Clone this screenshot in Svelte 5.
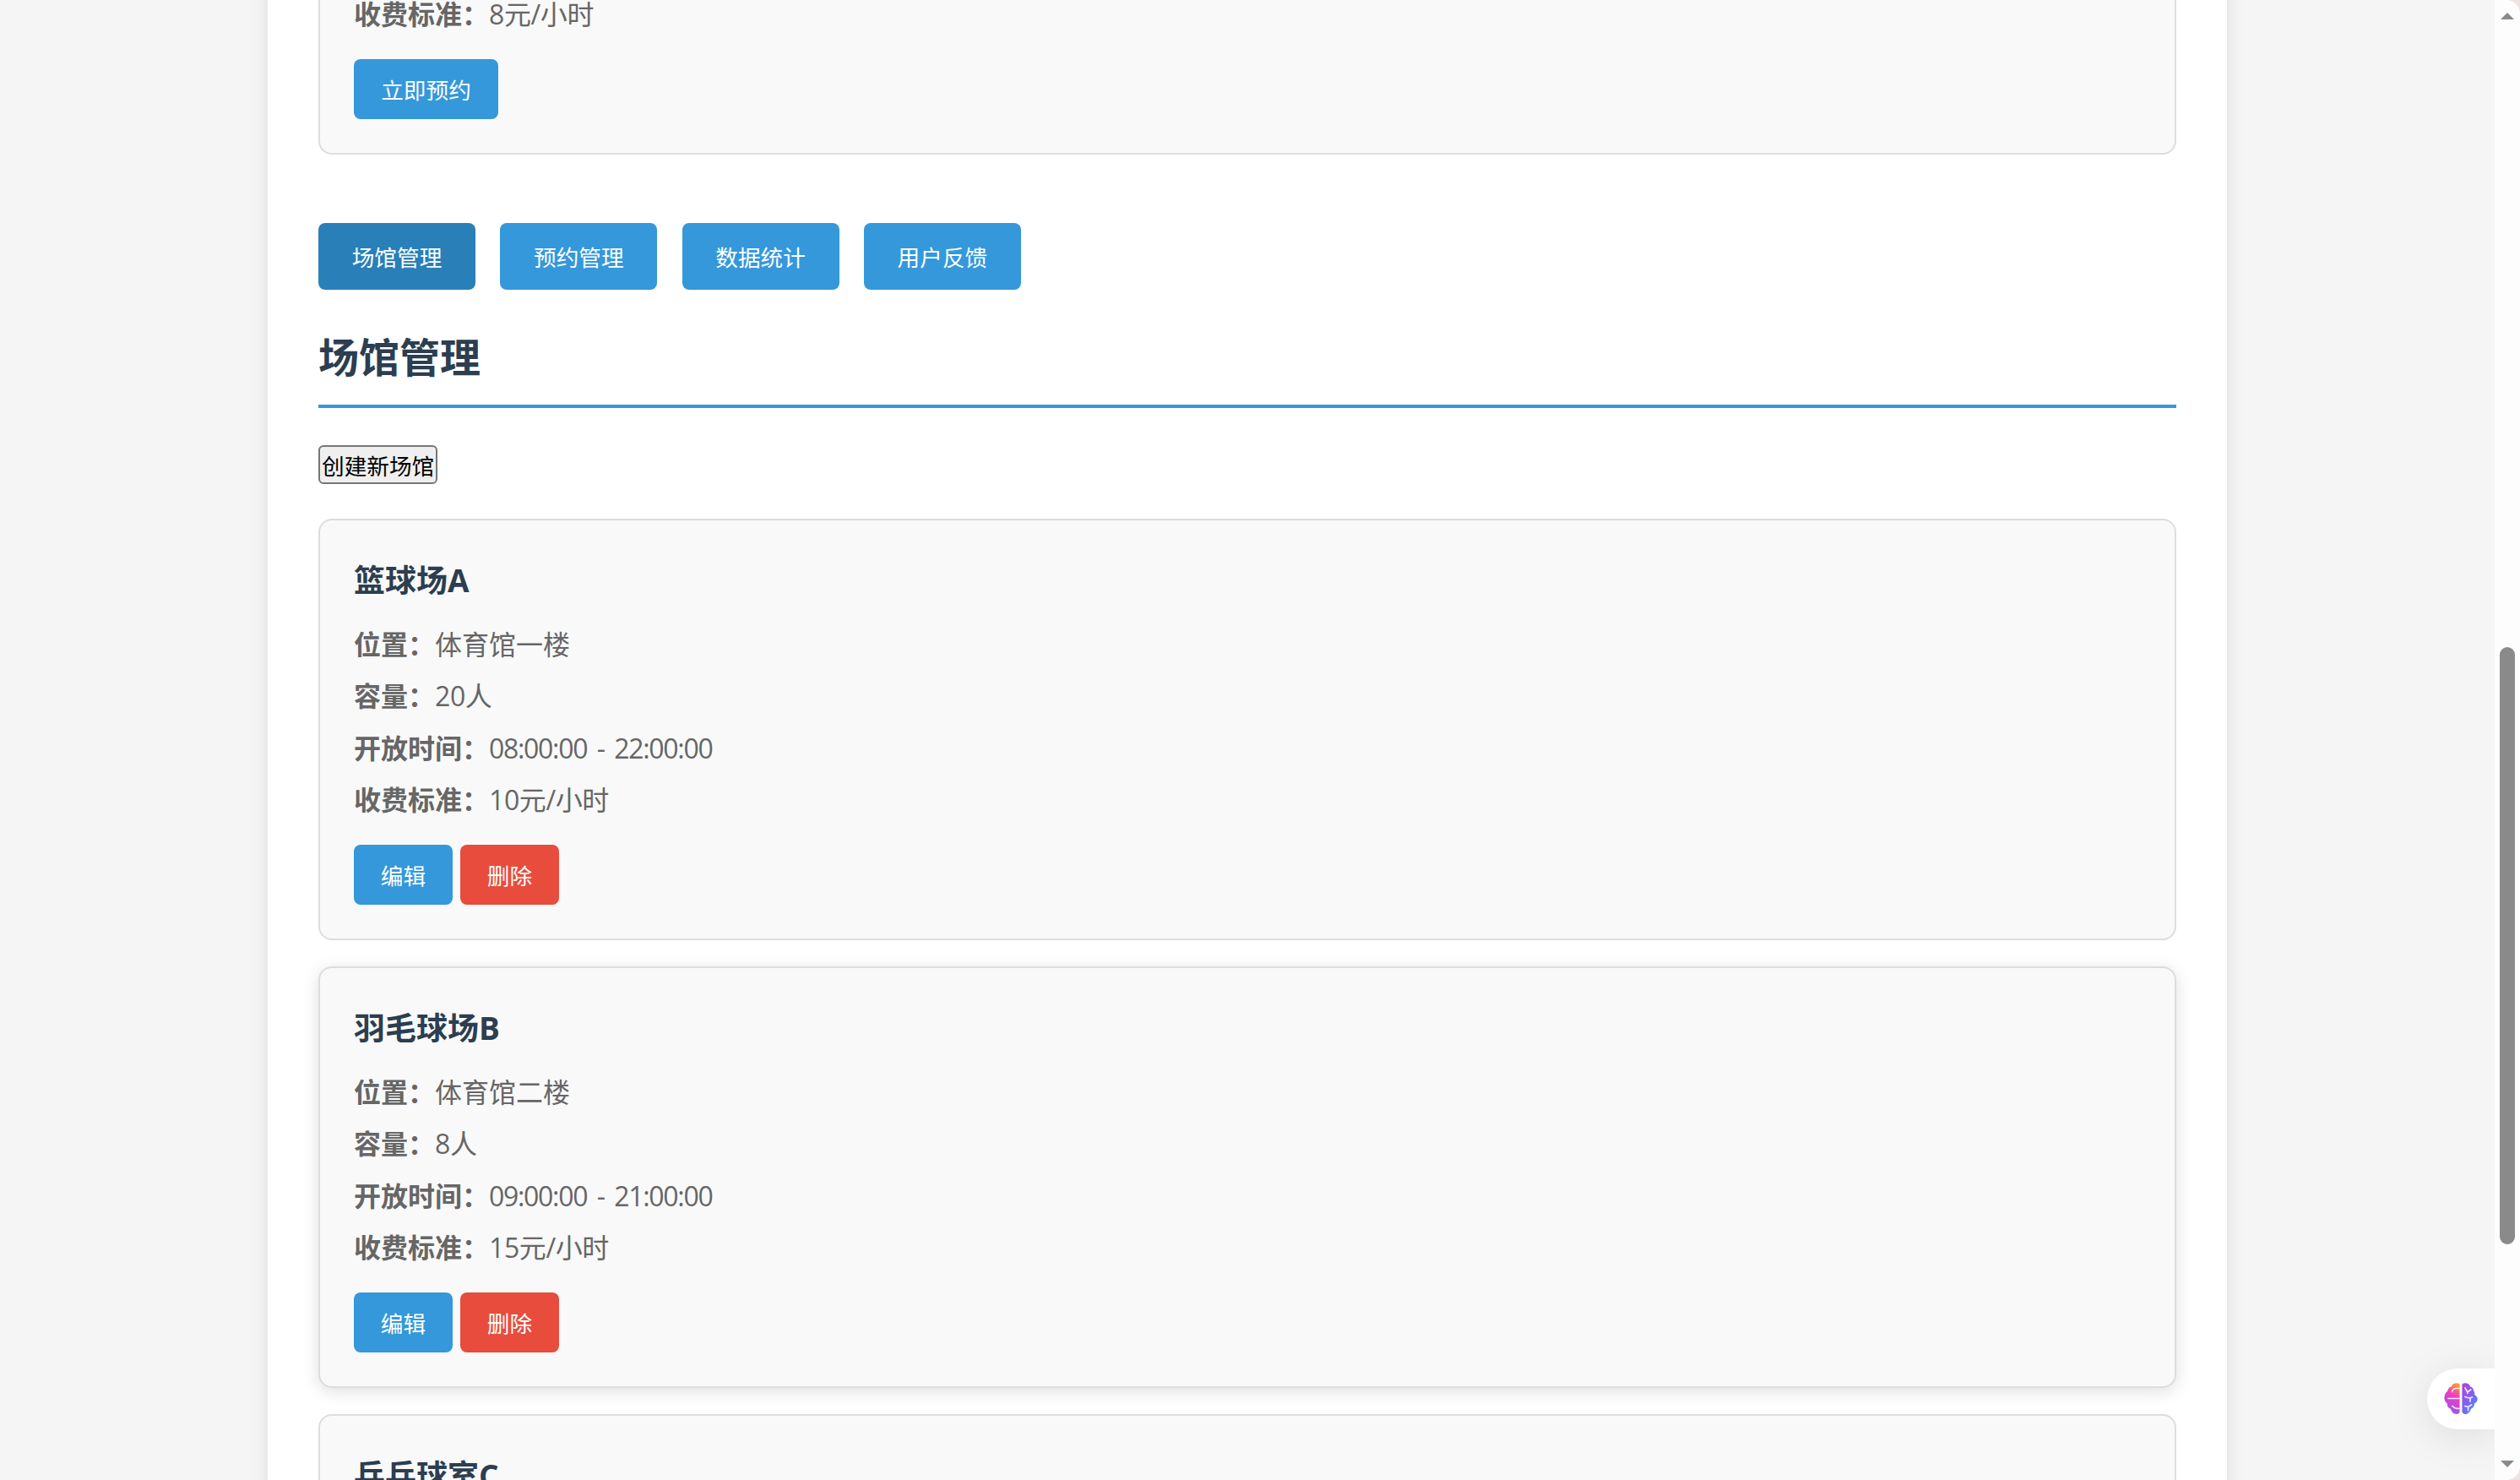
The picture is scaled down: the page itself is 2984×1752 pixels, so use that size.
<script lang="ts">
  // Admin part of the venue booking page, scrolled partway down.
  const tabs = ["场馆管理", "预约管理", "数据统计", "用户反馈"];
  const venues = [
    { name: "篮球场A", place: "体育馆一楼", size: "20人", open: "08:00:00 - 22:00:00", fee: "10元/小时" },
    { name: "羽毛球场B", place: "体育馆二楼", size: "8人", open: "09:00:00 - 21:00:00", fee: "15元/小时", hovered: true },
    { name: "乒乓球室C", place: "体育馆三楼", size: "6人", open: "09:00:00 - 21:00:00", fee: "8元/小时" },
  ];
</script>

<div class="window">
  <div class="viewport">
    <main class="container">
      <section class="card first">
        <p><strong>收费标准：</strong><span class="num">8元/小时</span></p>
        <div class="actions"><button class="btn">立即预约</button></div>
      </section>

      <nav class="tabs">
        {#each tabs as tab, i}
          <button class="tab" class:active={i === 0}>{tab}</button>
        {/each}
      </nav>

      <h2>场馆管理</h2>
      <button class="plain">创建新场馆</button>

      {#each venues as v}
        <section class="card" class:hovered={v.hovered}>
          <h3>{v.name}</h3>
          <p><strong>位置：</strong><span>{v.place}</span></p>
          <p><strong>容量：</strong><span class="num">{v.size}</span></p>
          <p><strong>开放时间：</strong><span class="time">{v.open}</span></p>
          <p><strong>收费标准：</strong><span class="num">{v.fee}</span></p>
          <div class="actions">
            <button class="btn">编辑</button>
            <button class="btn danger">删除</button>
          </div>
        </section>
      {/each}
    </main>

    <div class="assistant">
      <svg width="40" height="38" viewBox="0 0 40 38" aria-hidden="true">
        <defs>
          <linearGradient id="left-lobe" x1="0.75" y1="0" x2="0.4" y2="1">
            <stop offset="0" stop-color="#fb9f1c" />
            <stop offset="0.4" stop-color="#f03cc4" />
            <stop offset="1" stop-color="#9058ee" />
          </linearGradient>
          <linearGradient id="right-lobe" x1="0.1" y1="0" x2="0.8" y2="1">
            <stop offset="0" stop-color="#ab45dc" />
            <stop offset="0.55" stop-color="#7d62f2" />
            <stop offset="1" stop-color="#2f9ffa" />
          </linearGradient>
        </defs>
        <path fill="url(#left-lobe)" d="M18.6 2.6C18.6 1 17 .2 15 .2c-3 0-5.300 1.600-6 4C6.300 4.800 4.200 7 4.300 9.800 2.300 11.200 .4 13.800 .4 18c0 3 1.500 5 3.300 6.200-.2 3 1.600 5.800 4.300 6.600 1 3.500 3.600 6.200 6.800 6.200 2.400 0 3.800-1.200 3.800-3.200z" />
        <path fill="url(#right-lobe)" d="M21.400 2.600C21.400 1 23 .2 25 .2c3 0 5.300 1.600 6 4 2.400.8 4 2.700 4.200 5.400 1.200 1.600 1.300 3.400 1 4.700 2.200 1 3.500 2.700 3.500 4.700 0 2.400-1.500 4.300-3.700 5.300.2 3-1.600 5.600-4 6.400-1 3.500-3.600 6.300-6.800 6.300-2.400 0-3.800-1.200-3.800-3.200z" />
        <g fill="none" stroke="#f4e6fb" stroke-width="1.700" stroke-linecap="round" stroke-linejoin="round">
          <path d="M5 18.500h13.500" />
          <path d="M9.500 10.500c.6-2.800 2.500-4 5-4h3.500" />
          <path d="M10 27.500c1.500 1.800 3 2.400 4.500 2.800h3.500" />
          <path d="M25 6l2.800 5 4-3M27.800 11v1.500" />
          <path d="M25 16.500c3 1.500 6 1.600 8.500.5M31 18v4" />
          <path d="M24.800 27.500l3.800 1 4-2.500M28.600 28.500v4" />
        </g>
      </svg>
    </div>
  </div>

  <aside class="scrollbar">
    <span class="arrow up"></span>
    <div class="track"><div class="thumb"></div></div>
    <span class="arrow down"></span>
  </aside>
</div>

<style>
  :global(body) {
    margin: 0;
    background: #f0e2e0;
  }
  .window {
    display: flex;
    height: 100vh;
    overflow: hidden;
    font-family: "Open Sans", "Noto Sans CJK SC", sans-serif;
    color: #666;
  }
  .viewport {
    position: relative;
    flex: 1 1 auto;
    min-width: 0;
    overflow: hidden;
    background: #f5f5f5;
  }
  .container {
    width: 2200px;
    margin: 0 auto;
    padding: 0 60px;
    min-height: 100%;
    background: #fff;
    box-shadow: 0 0 20px rgba(0, 0, 0, 0.1);
  }
  .card {
    margin-bottom: 31px;
    padding: 40px;
    background: #f9f9f9;
    border: 2px solid #ddd;
    border-radius: 16px;
  }
  .card.first {
    margin-top: -48px;
    margin-bottom: 0;
  }
  .card.hovered {
    box-shadow: 0 4px 20px rgba(0, 0, 0, 0.13);
  }
  h3 {
    margin: 0 0 22px;
    font-size: 37px;
    line-height: 62px;
    font-weight: 700;
    color: #2c3e50;
  }
  p {
    margin: 0 0 15.33px;
    font-size: 32px;
    line-height: 46px;
  }
  strong {
    font-weight: 700;
  }
  .num {
    letter-spacing: -0.4px;
  }
  .time {
    letter-spacing: -1.3px;
    word-spacing: 4.5px;
  }
  .actions {
    display: flex;
    gap: 9px;
    margin-top: 30px;
  }
  .btn {
    width: 117px;
    height: 71px;
    padding: 0;
    border: 0;
    border-radius: 8px;
    background: #3498db;
    color: #fff;
    font: inherit;
    font-size: 26.67px;
  }
  .first .btn {
    width: 171px;
  }
  .btn.danger {
    background: #e74c3c;
  }
  .tabs {
    display: flex;
    gap: 29.3px;
    margin-top: 81px;
  }
  .tab {
    width: 186px;
    height: 79px;
    padding: 0;
    border: 0;
    border-radius: 8px;
    background: #3498db;
    color: #fff;
    font: inherit;
    font-size: 26.67px;
  }
  .tab.active {
    background: #2980b9;
  }
  h2 {
    margin: 45px 0 44px;
    padding-bottom: 21px;
    border-bottom: 4px solid #3498db;
    font-size: 48px;
    line-height: 70px;
    font-weight: 700;
    color: #2c3e50;
  }
  .plain {
    display: block;
    width: 141px;
    height: 46px;
    margin-bottom: 41px;
    padding: 3px 2px 0;
    border: 2px solid #767676;
    border-radius: 6px;
    background: #efefef;
    color: #000;
    font: inherit;
    font-size: 26.67px;
    line-height: 40px;
    white-space: nowrap;
  }
  .assistant {
    position: absolute;
    right: 0;
    top: 1620px;
    display: flex;
    align-items: center;
    justify-content: center;
    width: 80px;
    height: 72px;
    border-radius: 36px 0 0 36px;
    background: #fff;
    box-shadow: 0 8px 48px rgba(0, 0, 0, 0.1);
  }
  .scrollbar {
    flex: 0 0 30px;
    display: flex;
    flex-direction: column;
    align-items: center;
    background: #fdfdfd;
    border-radius: 0 16px 16px 0;
  }
  .arrow {
    flex: 0 0 auto;
    width: 0;
    height: 0;
    border-left: 8px solid transparent;
    border-right: 8px solid transparent;
  }
  .arrow.up {
    margin-top: 15px;
    border-bottom: 8px solid #8a8a8a;
  }
  .arrow.down {
    margin-bottom: 15px;
    border-top: 8px solid #8a8a8a;
  }
  .track {
    flex: 1 1 auto;
    width: 18px;
    padding-top: 743px;
    box-sizing: border-box;
  }
  .thumb {
    height: 707px;
    border-radius: 9px;
    background: #8a8a8a;
  }
</style>
